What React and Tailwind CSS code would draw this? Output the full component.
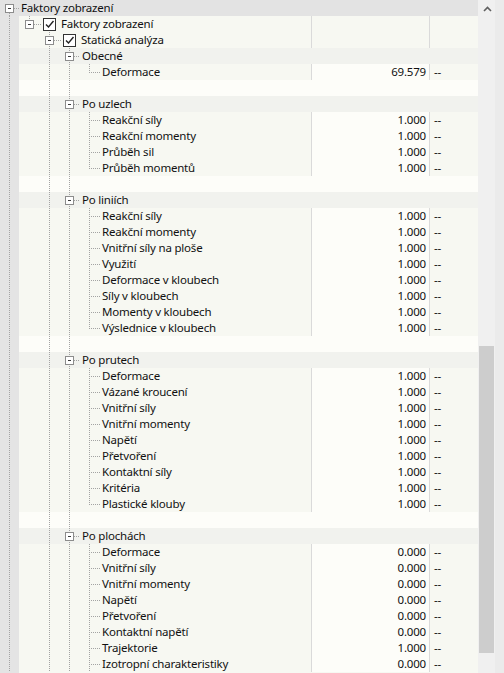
import React from "react";

const DOT = "#a3a3a3";

const rows = [
  { t: "root", label: "Faktory zobrazení" },
  { t: "d1", label: "Faktory zobrazení" },
  { t: "d2", label: "Statická analýza" },
  { t: "group", label: "Obecné" },
  { t: "leaf", label: "Deformace", v: "69.579", last: true },
  { t: "blank" },
  { t: "group", label: "Po uzlech" },
  { t: "leaf", label: "Reakční síly", v: "1.000" },
  { t: "leaf", label: "Reakční momenty", v: "1.000" },
  { t: "leaf", label: "Průběh sil", v: "1.000" },
  { t: "leaf", label: "Průběh momentů", v: "1.000", last: true },
  { t: "blank" },
  { t: "group", label: "Po liniích" },
  { t: "leaf", label: "Reakční síly", v: "1.000" },
  { t: "leaf", label: "Reakční momenty", v: "1.000" },
  { t: "leaf", label: "Vnitřní síly na ploše", v: "1.000" },
  { t: "leaf", label: "Využití", v: "1.000" },
  { t: "leaf", label: "Deformace v kloubech", v: "1.000" },
  { t: "leaf", label: "Síly v kloubech", v: "1.000" },
  { t: "leaf", label: "Momenty v kloubech", v: "1.000" },
  { t: "leaf", label: "Výslednice v kloubech", v: "1.000", last: true },
  { t: "blank" },
  { t: "group", label: "Po prutech" },
  { t: "leaf", label: "Deformace", v: "1.000" },
  { t: "leaf", label: "Vázané kroucení", v: "1.000" },
  { t: "leaf", label: "Vnitřní síly", v: "1.000" },
  { t: "leaf", label: "Vnitřní momenty", v: "1.000" },
  { t: "leaf", label: "Napětí", v: "1.000" },
  { t: "leaf", label: "Přetvoření", v: "1.000" },
  { t: "leaf", label: "Kontaktní síly", v: "1.000" },
  { t: "leaf", label: "Kritéria", v: "1.000" },
  { t: "leaf", label: "Plastické klouby", v: "1.000", last: true },
  { t: "blank" },
  { t: "group", label: "Po plochách" },
  { t: "leaf", label: "Deformace", v: "0.000" },
  { t: "leaf", label: "Vnitřní síly", v: "0.000" },
  { t: "leaf", label: "Vnitřní momenty", v: "0.000" },
  { t: "leaf", label: "Napětí", v: "0.000" },
  { t: "leaf", label: "Přetvoření", v: "0.000" },
  { t: "leaf", label: "Kontaktní napětí", v: "0.000" },
  { t: "leaf", label: "Trajektorie", v: "1.000" },
  { t: "leaf", label: "Izotropní charakteristiky", v: "0.000" },
];

function VLine({ x, y1 = 0, y2 = 16 }) {
  return (
    <line x1={x + 0.5} x2={x + 0.5} y1={y1} y2={y2} stroke={DOT} strokeWidth="1" strokeDasharray="1 1" />
  );
}
function HLine({ x1, x2 }) {
  return (
    <line x1={x1} x2={x2} y1={8.5} y2={8.5} stroke={DOT} strokeWidth="1" strokeDasharray="1 1" />
  );
}
function Box({ cx }) {
  return (
    <g>
      <rect x={cx - 3.5} y={4.5} width={8} height={8} fill="#ffffff" stroke="#8c8c8c" strokeWidth="1" />
      <line x1={cx - 1} x2={cx + 2} y1={8.5} y2={8.5} stroke="#3a3a3a" strokeWidth="1" />
    </g>
  );
}
function Check({ x }) {
  return (
    <g>
      <rect x={x + 0.5} y={2.5} width={12} height={12} fill="#ffffff" stroke="#333333" strokeWidth="1" />
      <path d={`M${x + 3} ${8.5} L${x + 5.5} ${11} L${x + 10.5} ${5}`} fill="none" stroke="#222222" strokeWidth="1.4" />
    </g>
  );
}

function Guides({ row }) {
  const t = row.t;
  let width = 22;
  let content = null;
  if (t === "root") {
    width = 21;
    content = (
      <>
        <VLine x={9} y1={13} y2={16} />
        <Box cx={9} />
        <HLine x1={14} x2={19} />
      </>
    );
  } else if (t === "d1") {
    width = 61;
    content = (
      <>
        <VLine x={9} />
        <VLine x={29} y1={0} y2={4} />
        <Box cx={29} />
        <HLine x1={34} x2={42} />
        <Check x={43} />
      </>
    );
  } else if (t === "d2") {
    width = 81;
    content = (
      <>
        <VLine x={9} />
        <VLine x={49} />
        <Box cx={49} />
        <HLine x1={54} x2={62} />
        <Check x={63} />
      </>
    );
  } else if (t === "group") {
    width = 82;
    content = (
      <>
        <VLine x={9} />
        <VLine x={49} />
        <VLine x={69} />
        <Box cx={69} />
        <HLine x1={74} x2={80} />
      </>
    );
  } else if (t === "leaf") {
    width = 102;
    content = (
      <>
        <VLine x={9} />
        <VLine x={49} />
        <VLine x={69} />
        <VLine x={89} y1={0} y2={row.last ? 9 : 16} />
        <HLine x1={91} x2={100} />
      </>
    );
  } else {
    width = 100;
    content = (
      <>
        <VLine x={9} />
        <VLine x={49} />
        <VLine x={69} />
      </>
    );
  }
  return (
    <svg width={width} height={16} className="shrink-0 block">
      {content}
    </svg>
  );
}

function Row({ row }) {
  const t = row.t;
  if (t === "root") {
    return (
      <div className="flex h-4 w-[478px] items-center bg-[#e3e3e3]">
        <Guides row={row} />
        <span className="leading-4 whitespace-nowrap">{row.label}</span>
      </div>
    );
  }
  const treeBg =
    t === "group"
      ? "bg-[linear-gradient(to_right,#e4e4e4_19px,#f1f2ee_19px)]"
      : t === "blank"
      ? "bg-[linear-gradient(to_right,#e4e4e4_19px,#fdfdf9_19px)]"
      : "bg-[linear-gradient(to_right,#e4e4e4_19px,#f7f8f2_19px)]";
  const hasCols = t === "d1" || t === "d2" || t === "leaf";
  const rowBg = t === "group" ? "bg-[#f1f2ee]" : t === "blank" ? "bg-[#fdfdf9]" : "bg-[#f7f8f2]";
  return (
    <div className={`flex h-4 w-[478px] ${rowBg}`}>
      <div className={`flex h-4 w-[311px] shrink-0 items-center ${treeBg}`}>
        <Guides row={row} />
        {row.label && <span className="leading-4 whitespace-nowrap">{row.label}</span>}
      </div>
      {hasCols ? (
        <>
          <div
            className={`flex h-4 w-[118px] shrink-0 items-center justify-end border-l border-[#dadada] pr-[3px] ${
              t === "leaf" ? "bg-[#fdfdf9]" : ""
            }`}
          >
            <span className="leading-4">{row.v || ""}</span>
          </div>
          <div className="flex h-4 w-[49px] shrink-0 items-center border-l border-[#dadada] pl-[4px]">
            <span className="leading-4">{row.v ? "--" : ""}</span>
          </div>
        </>
      ) : null}
    </div>
  );
}

export default function App() {
  return (
    <div
      className="flex h-[673px] w-[504px] overflow-hidden bg-[#ebebeb] text-[11.5px] tracking-[-0.2px] text-[#111111]"
      style={{ fontFamily: '"Noto Sans", "Open Sans", sans-serif' }}
    >
      <div className="flex w-[478px] shrink-0 flex-col">
        {rows.map((r, i) => (
          <Row key={i} row={r} />
        ))}
        <div className="h-px w-[478px] bg-[linear-gradient(to_right,#e4e4e4_19px,#f7f8f2_19px)]" />
      </div>
      <div className="flex w-[17px] shrink-0 flex-col bg-[#f0f0f0]">
        <div className="flex h-[17px] items-center justify-center pl-px">
          <svg width="9" height="6" className="block">
            <path d="M1 5 L4.5 1.5 L8 5" fill="none" stroke="#606060" strokeWidth="1.6" />
          </svg>
        </div>
        <div className="ml-px mt-[329px] h-[307px] w-[15px] bg-[#cdcdcd]" />
      </div>
      <div className="flex-1 bg-[#ebebeb]" />
    </div>
  );
}
